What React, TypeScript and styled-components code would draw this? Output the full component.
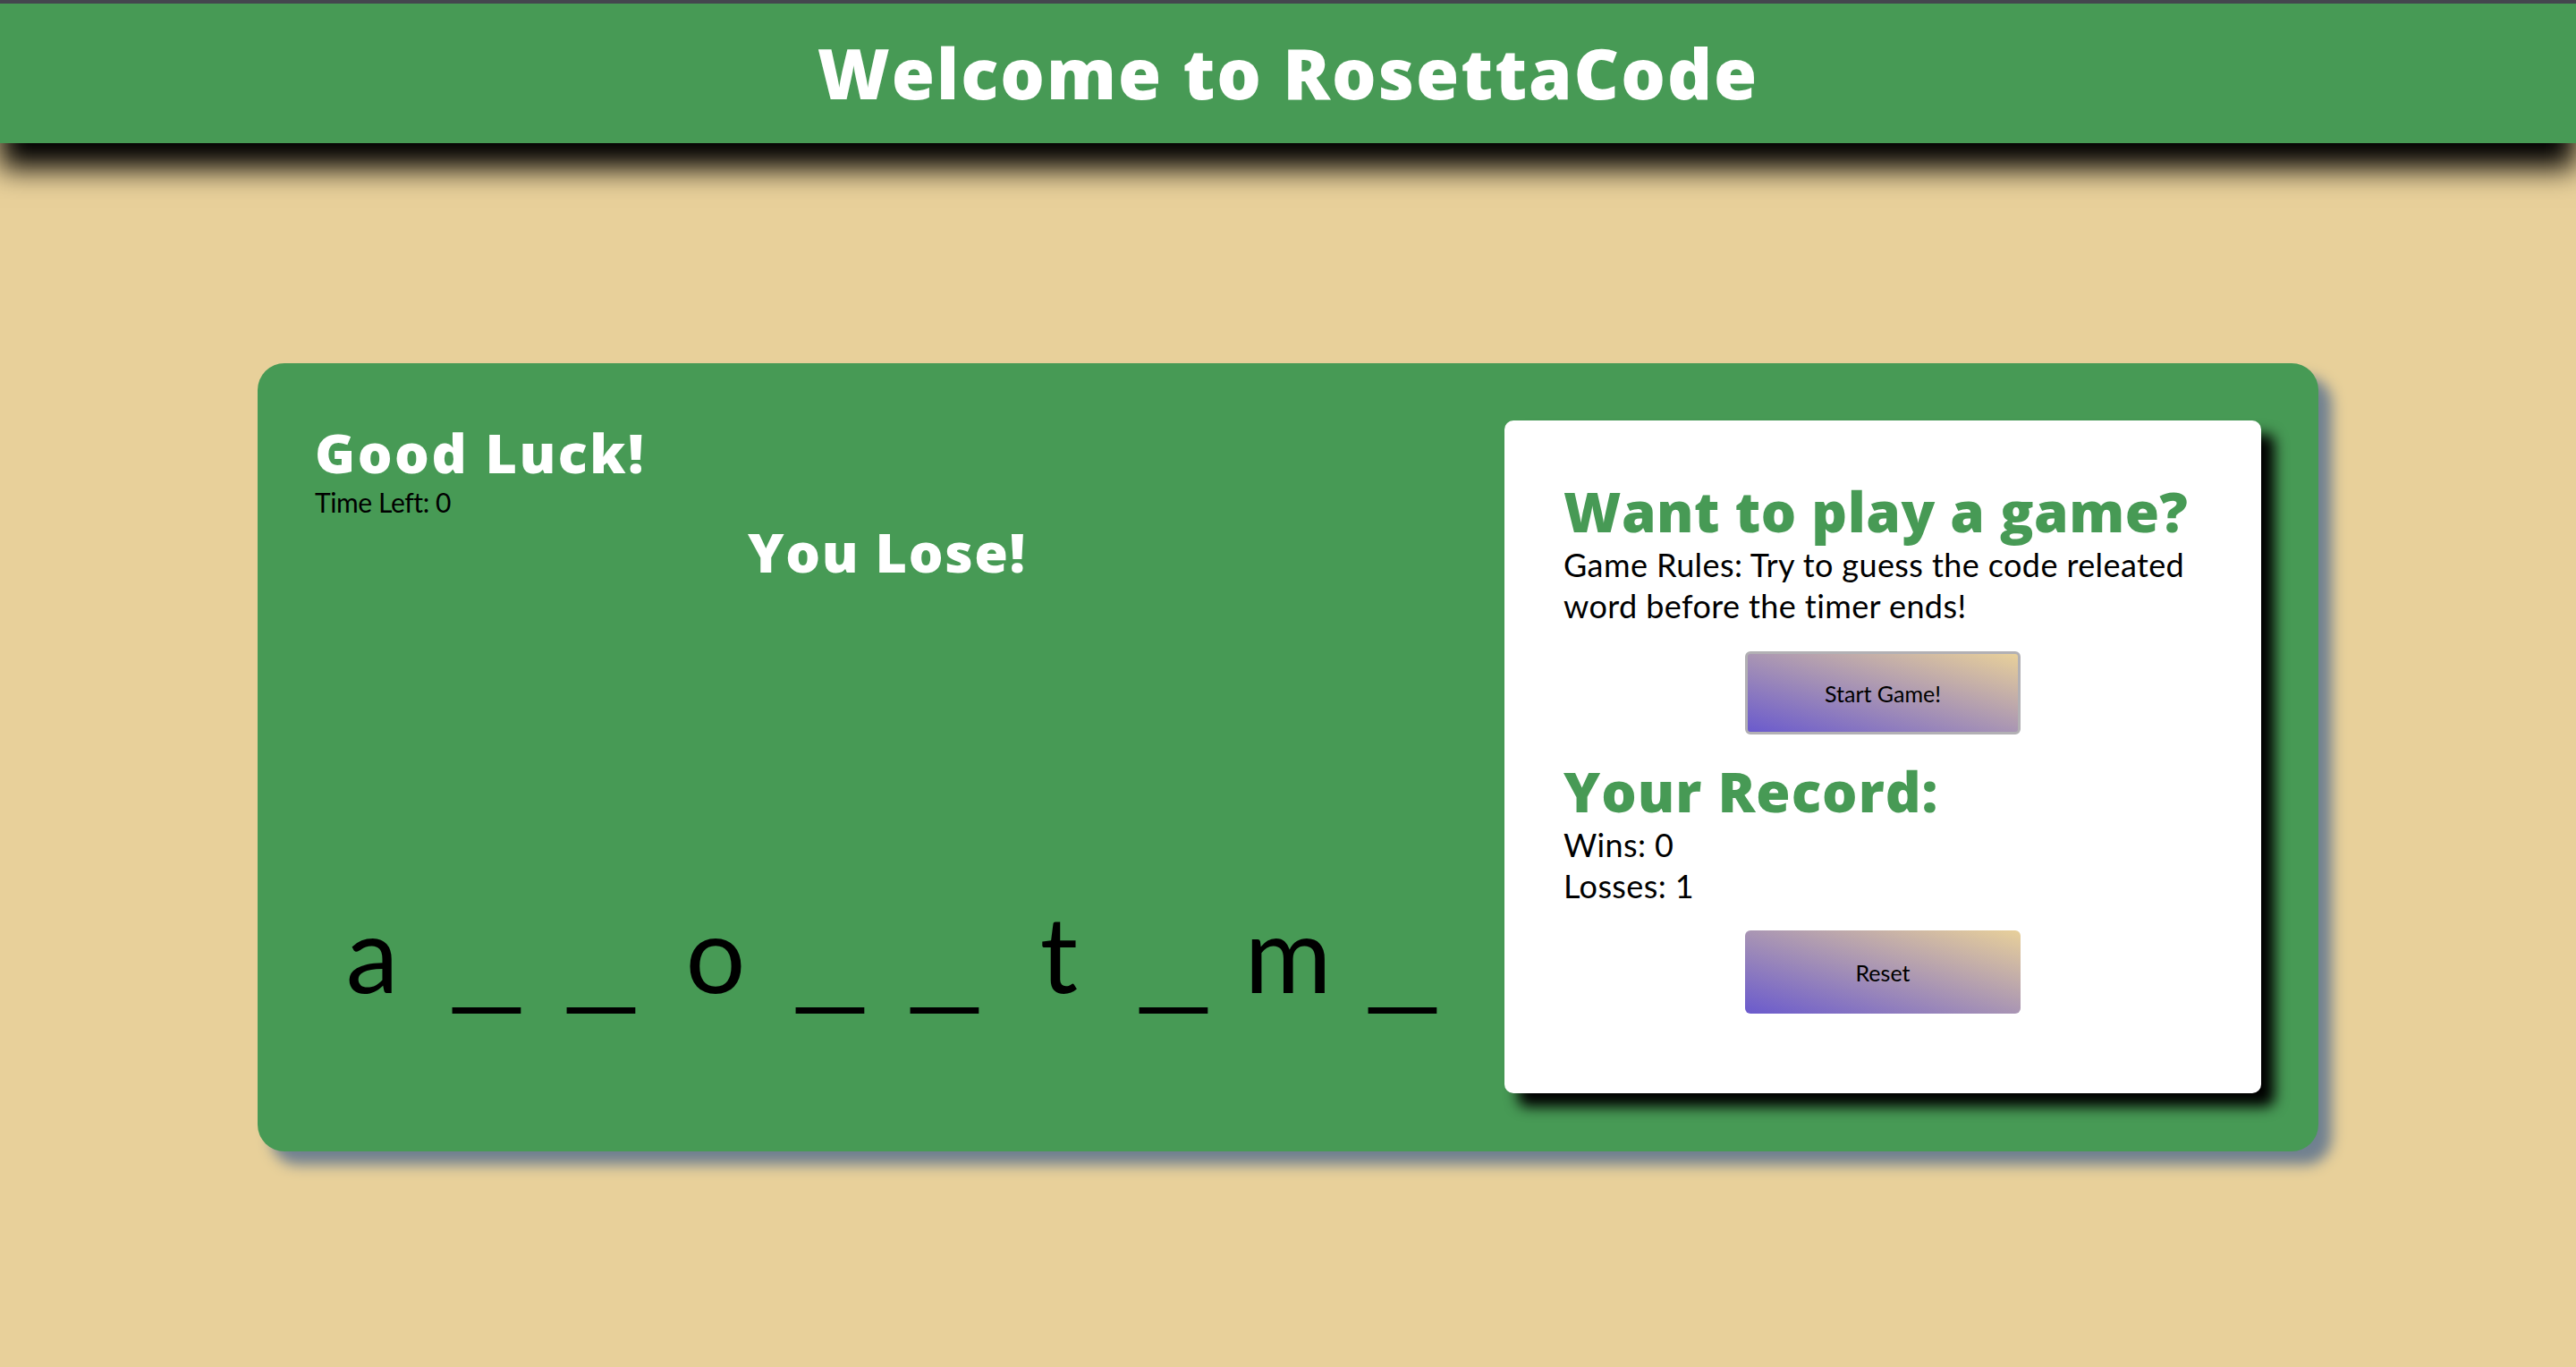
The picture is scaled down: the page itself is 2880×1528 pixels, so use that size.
import React from "react";
import styled, { createGlobalStyle, css } from "styled-components";

const GREEN = "#479a55";
const TAN = "#e8d09a";
const HEADING_FONT = `"Open Sans", Lato, sans-serif`;

const GlobalStyle = createGlobalStyle`
  html, body {
    margin: 0;
    padding: 0;
    background: ${TAN};
    font-family: Lato, "Open Sans", sans-serif;
  }
  #root {
    min-height: 100vh;
  }
`;

const Page = styled.div`
  min-height: 100vh;
  display: flex;
  flex-direction: column;
`;

const Header = styled.header`
  position: relative;
  z-index: 2;
  height: 156px;
  border-top: 4px solid #44464e;
  background: ${GREEN};
  box-shadow: 0 28px 30px #000;
  display: flex;
  align-items: center;
  justify-content: center;
`;

const Title = styled.h1`
  margin: 0;
  color: #fff;
  font-family: ${HEADING_FONT};
  font-size: 78px;
  line-height: 1.2;
  font-weight: 800;
  letter-spacing: 2px;
`;

const Main = styled.main`
  padding: 246px 288px 240px;
`;

const GameCard = styled.section`
  background: ${GREEN};
  border-radius: 30px;
  box-shadow: 15px 15px 15px slategray;
  padding: 64px 64px 65px 64px;
  display: flex;
  gap: 50px;
`;

const PlayArea = styled.div`
  flex: 1;
  display: flex;
  flex-direction: column;
`;

const Greeting = styled.h2`
  margin: 0;
  color: #fff;
  font-family: ${HEADING_FONT};
  font-size: 61px;
  line-height: 72px;
  font-weight: 800;
  letter-spacing: 2.5px;
`;

const Timer = styled.p`
  margin: 0;
  font-size: 30px;
  line-height: 38px;
  letter-spacing: -0.4px;
  color: #000;
`;

const Result = styled.h2`
  margin: 0;
  align-self: center;
  color: #fff;
  font-family: ${HEADING_FONT};
  font-size: 61px;
  line-height: 73px;
  font-weight: 800;
  letter-spacing: 1.6px;
`;

const Word = styled.div`
  margin-top: auto;
  margin-bottom: 86px;
  display: flex;
`;

const Cell = styled.span<{ $blank?: boolean }>`
  display: inline-block;
  width: 128px;
  text-align: center;
  font-size: 118px;
  line-height: 142px;
  color: #000;
  ${(p) =>
    p.$blank &&
    css`
      transform: translateY(6px) scaleX(1.65);
    `}
`;

const InfoCard = styled.aside`
  width: 846px;
  box-sizing: border-box;
  background: #fff;
  border-radius: 10px;
  box-shadow: 15px 15px 15px #000;
  padding: 64px 66px 89px;
  display: flex;
  flex-direction: column;
`;

const CardHeading = styled.h2<{ $gap?: number; $spacing: number }>`
  margin: ${(p) => p.$gap ?? 0}px 0 0;
  color: ${GREEN};
  font-family: ${HEADING_FONT};
  font-size: 62px;
  line-height: 74px;
  font-weight: 800;
  letter-spacing: ${(p) => p.$spacing}px;
  white-space: nowrap;
`;

const CardText = styled.p`
  margin: 0;
  font-size: 36px;
  line-height: 46px;
  letter-spacing: 0.4px;
  color: #000;
`;

const GradientButton = styled.button<{ $outlined?: boolean; $gap: number }>`
  align-self: center;
  margin-top: ${(p) => p.$gap}px;
  width: 308px;
  height: 93px;
  box-sizing: border-box;
  border-radius: 6px;
  border: ${(p) => (p.$outlined ? "3px solid #b2b0b4" : "none")};
  background: linear-gradient(to top right, slateblue, ${TAN});
  font-family: Lato, "Open Sans", sans-serif;
  font-size: 25px;
  color: #000;
  cursor: pointer;
`;

const letters = ["a", "_", "_", "o", "_", "_", "t", "_", "m", "_"];

export default function App() {
  return (
    <Page>
      <GlobalStyle />
      <Header>
        <Title>Welcome to RosettaCode</Title>
      </Header>
      <Main>
        <GameCard>
          <PlayArea>
            <Greeting>Good Luck!</Greeting>
            <Timer>Time Left: 0</Timer>
            <Result>You Lose!</Result>
            <Word>
              {letters.map((l, i) => (
                <Cell key={i} $blank={l === "_"}>
                  {l}
                </Cell>
              ))}
            </Word>
          </PlayArea>
          <InfoCard>
            <CardHeading $spacing={0.5}>Want to play a game?</CardHeading>
            <CardText>
              Game Rules: Try to guess the code releated word before the timer ends!
            </CardText>
            <GradientButton $outlined $gap={28}>
              Start Game!
            </GradientButton>
            <CardHeading $gap={26} $spacing={1}>
              Your Record:
            </CardHeading>
            <CardText>Wins: 0</CardText>
            <CardText>Losses: 1</CardText>
            <GradientButton $gap={27}>Reset</GradientButton>
          </InfoCard>
        </GameCard>
      </Main>
    </Page>
  );
}
